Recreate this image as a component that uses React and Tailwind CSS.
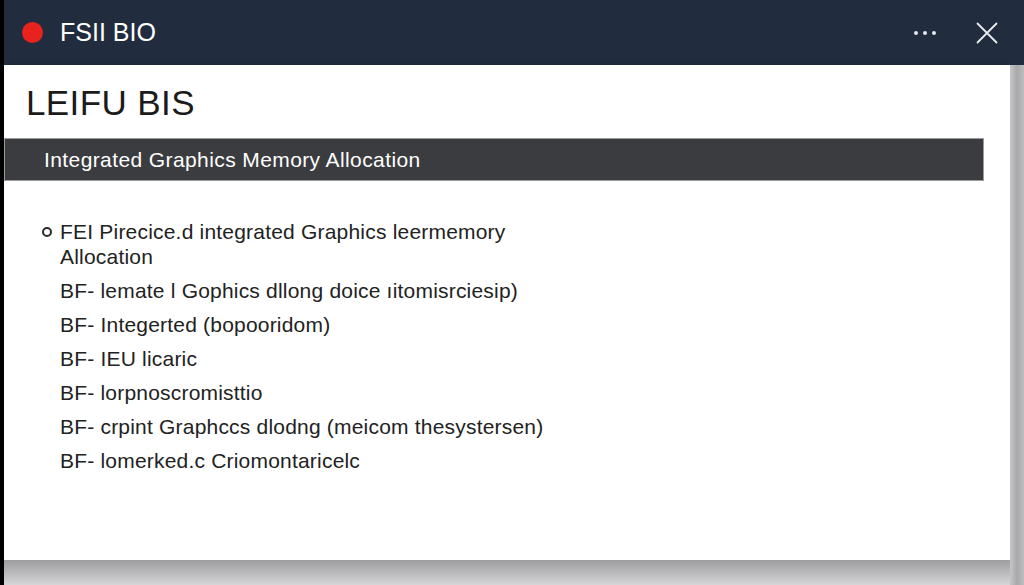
import React from "react";

const items = [
  "BF- lemate l Gophics dllong doice \u0131itomisrciesip)",
  "BF- Integerted (bopooridom)",
  "BF- IEU licaric",
  "BF- lorpnoscromisttio",
  "BF- crpint Graphccs dlodng (meicom thesystersen)",
  "BF- lomerked.c Criomontaricelc",
];

export default function App() {
  return (
    <div
      className="w-[1024px] h-[585px] flex bg-black overflow-hidden"
      style={{ fontFamily: '"Liberation Sans", Arial, sans-serif' }}
    >
      <div className="w-[4px] shrink-0 bg-black" />
      <div className="flex-1 flex flex-col">
        <header className="h-[65px] shrink-0 bg-[#212c3e] flex items-center pl-[18px] pr-[26px]">
          <span className="w-[21px] h-[21px] rounded-full bg-[#e8231e]" />
          <span className="ml-[17px] text-[25px] leading-none text-white">FSII BIO</span>
          <div className="ml-auto flex items-center gap-[5px] mr-[40px]">
            <span className="w-[4px] h-[4px] rounded-full bg-[#e6e8ec]" />
            <span className="w-[4px] h-[4px] rounded-full bg-[#e6e8ec]" />
            <span className="w-[4px] h-[4px] rounded-full bg-[#e6e8ec]" />
          </div>
          <svg width="22" height="22" viewBox="0 0 22 22" className="text-[#e9ebef]">
            <path d="M1.5 1.5 L20.5 20.5 M20.5 1.5 L1.5 20.5" stroke="currentColor" strokeWidth="1.8" strokeLinecap="round" />
          </svg>
        </header>
        <div className="flex-1 flex">
          <div className="w-[1006px] flex flex-col">
            <main className="h-[495px] bg-white pt-[20px] shadow-[0_2px_6px_rgba(0,0,0,0.25)]">
              <h1 className="pl-[22px] text-[35px] tracking-[0.4px] leading-none text-[#1b1b1b] font-normal">LEIFU BIS</h1>
              <div className="mt-[18px] w-[980px] h-[43px] bg-[#3b3c40] border border-[#9a9a9c] flex items-center pl-[39px]">
                <span className="text-[21px] tracking-[0.4px] leading-none text-white">
                  Integrated Graphics Memory Allocation
                </span>
              </div>
              <ul className="mt-[38px] pl-[38px] flex flex-col gap-[9px] text-[21px] tracking-[0.2px] leading-[25px] text-[#222222]">
                <li className="flex">
                  <span className="mt-[8px] w-[10px] h-[10px] shrink-0 rounded-full border-2 border-[#2a2a2a]" />
                  <span className="ml-[8px] w-[480px]">
                    FEI Pirecice.d integrated Graphics leermemory Allocation
                  </span>
                </li>
                {items.map((t) => (
                  <li key={t} className="pl-[18px]">{t}</li>
                ))}
              </ul>
            </main>
            <div className="flex-1 bg-gradient-to-b from-[#9d9d9f] to-[#d6d6d8]" />
          </div>
          <div className="flex-1 bg-gradient-to-r from-[#c6c6c8] via-[#a9a9ab] to-[#bdbdbf]" />
        </div>
      </div>
    </div>
  );
}
